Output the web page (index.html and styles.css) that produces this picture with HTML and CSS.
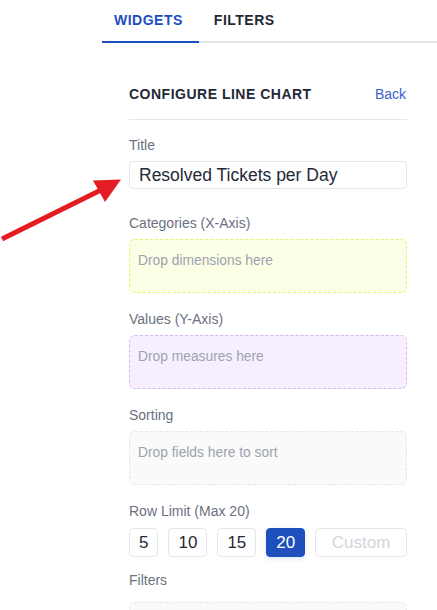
FILE: index.html
```html
<!DOCTYPE html>
<html lang="en">
<head>
<meta charset="utf-8">
<title>Configure Line Chart</title>
<link rel="stylesheet" href="styles.css">
</head>
<body>
<div class="sidebar">
  <nav class="tabs">
    <div class="tab tab-active">WIDGETS</div>
    <div class="tab">FILTERS</div>
  </nav>
  <section class="panel">
    <header class="panel-header">
      <h2 class="panel-title">CONFIGURE LINE CHART</h2>
      <a class="back-link">Back</a>
    </header>

    <div class="field field-title">
      <div class="label">Title</div>
      <div class="text-input">Resolved Tickets per Day</div>
    </div>

    <div class="field">
      <div class="label">Categories (X-Axis)</div>
      <div class="dropzone dz-yellow">Drop dimensions here</div>
    </div>

    <div class="field">
      <div class="label">Values (Y-Axis)</div>
      <div class="dropzone dz-purple">Drop measures here</div>
    </div>

    <div class="field">
      <div class="label">Sorting</div>
      <div class="dropzone dz-grey">Drop fields here to sort</div>
    </div>

    <div class="field">
      <div class="label label-tight">Row Limit (Max 20)</div>
      <div class="limit-row">
        <div class="limit-btn">5</div>
        <div class="limit-btn">10</div>
        <div class="limit-btn">15</div>
        <div class="limit-btn limit-active">20</div>
        <div class="limit-btn limit-custom">Custom</div>
      </div>
    </div>

    <div class="field field-filters">
      <div class="label label-filters">Filters</div>
      <div class="dropzone dz-grey dz-empty"></div>
    </div>
  </section>
</div>

<svg class="arrow" width="130" height="250" viewBox="0 0 130 250" aria-hidden="true">
  <line x1="2" y1="239" x2="101" y2="190" stroke="#e31d23" stroke-width="5"/>
  <polygon points="93,180.5 121,179.5 105,202" fill="#e31d23"/>
</svg>
</body>
</html>
```

FILE: styles.css
```css
html, body {
  margin: 0;
  padding: 0;
  background: #ffffff;
  overflow: hidden;
}

body {
  font-family: "Liberation Sans", Arial, sans-serif;
  color: #1f2937;
}

.sidebar {
  margin-left: 102px;
}

.tabs {
  display: flex;
  height: 41px;
  border-bottom: 2px solid #e5e7eb;
}

.tab {
  padding: 0 15px;
  line-height: 41px;
  font-size: 14px;
  font-weight: bold;
  letter-spacing: 0.5px;
  color: #1f2937;
}

.tab-active {
  padding-left: 12px;
  padding-right: 16px;
  color: #1e4fbf;
  border-bottom: 2px solid #1e4fbf;
  margin-bottom: -2px;
  line-height: 41px;
  height: 41px;
}

.panel {
  padding: 41px 30px 0 27px;
}

.panel-header {
  display: flex;
  justify-content: space-between;
  align-items: center;
  padding-bottom: 15px;
  border-bottom: 1px solid #e5e7eb;
  line-height: 20px;
}

.panel-title {
  margin: 0;
  font-size: 14px;
  font-weight: bold;
  letter-spacing: 0.5px;
  color: #1f2937;
}

.back-link {
  font-size: 14px;
  color: #3b5fc9;
  margin-right: 1px;
}

.field {
  margin-top: 18px;
}

.field-title {
  margin-top: 17px;
  margin-bottom: 26px;
}

.label {
  font-size: 14px;
  line-height: 16px;
  color: #6b7280;
  margin-bottom: 8px;
}

.label-tight {
  margin-bottom: 9px;
}

.text-input {
  box-sizing: border-box;
  height: 28px;
  border: 1px solid #e5e7eb;
  border-radius: 4px;
  padding: 0 9px;
  font-size: 17.5px;
  line-height: 26px;
  color: #1f2937;
}

.dropzone {
  box-sizing: border-box;
  min-height: 54px;
  border: 1px dashed #e5e7eb;
  border-radius: 6px;
  padding: 13px 8px;
  font-size: 13.8px;
  line-height: 16px;
  color: #9ca3af;
}

.dz-yellow {
  background: #fcfee6;
  border-color: #e8f56a;
}

.dz-purple {
  background: #f7effe;
  border-color: #d8b4fb;
}

.dz-grey {
  background: #fafafa;
  border-color: #e5e7eb;
}

.limit-row {
  display: flex;
  gap: 10px;
}

.limit-btn {
  box-sizing: border-box;
  height: 29px;
  padding: 0 9px;
  border: 1px solid #e5e7eb;
  border-radius: 4px;
  font-size: 17px;
  line-height: 27px;
  text-align: center;
  color: #1f2937;
  background: #ffffff;
}

.limit-active {
  background: #1e4fbd;
  border-color: #1e4fbd;
  color: #ffffff;
  box-shadow: 0 2px 4px rgba(30, 79, 189, 0.15);
}

.limit-custom {
  flex: 1;
  color: #d1d5db;
}

.field-filters {
  margin-top: 15px;
}

.label-filters {
  margin-bottom: 14px;
}

.arrow {
  position: absolute;
  left: 0;
  top: 0;
}
```
